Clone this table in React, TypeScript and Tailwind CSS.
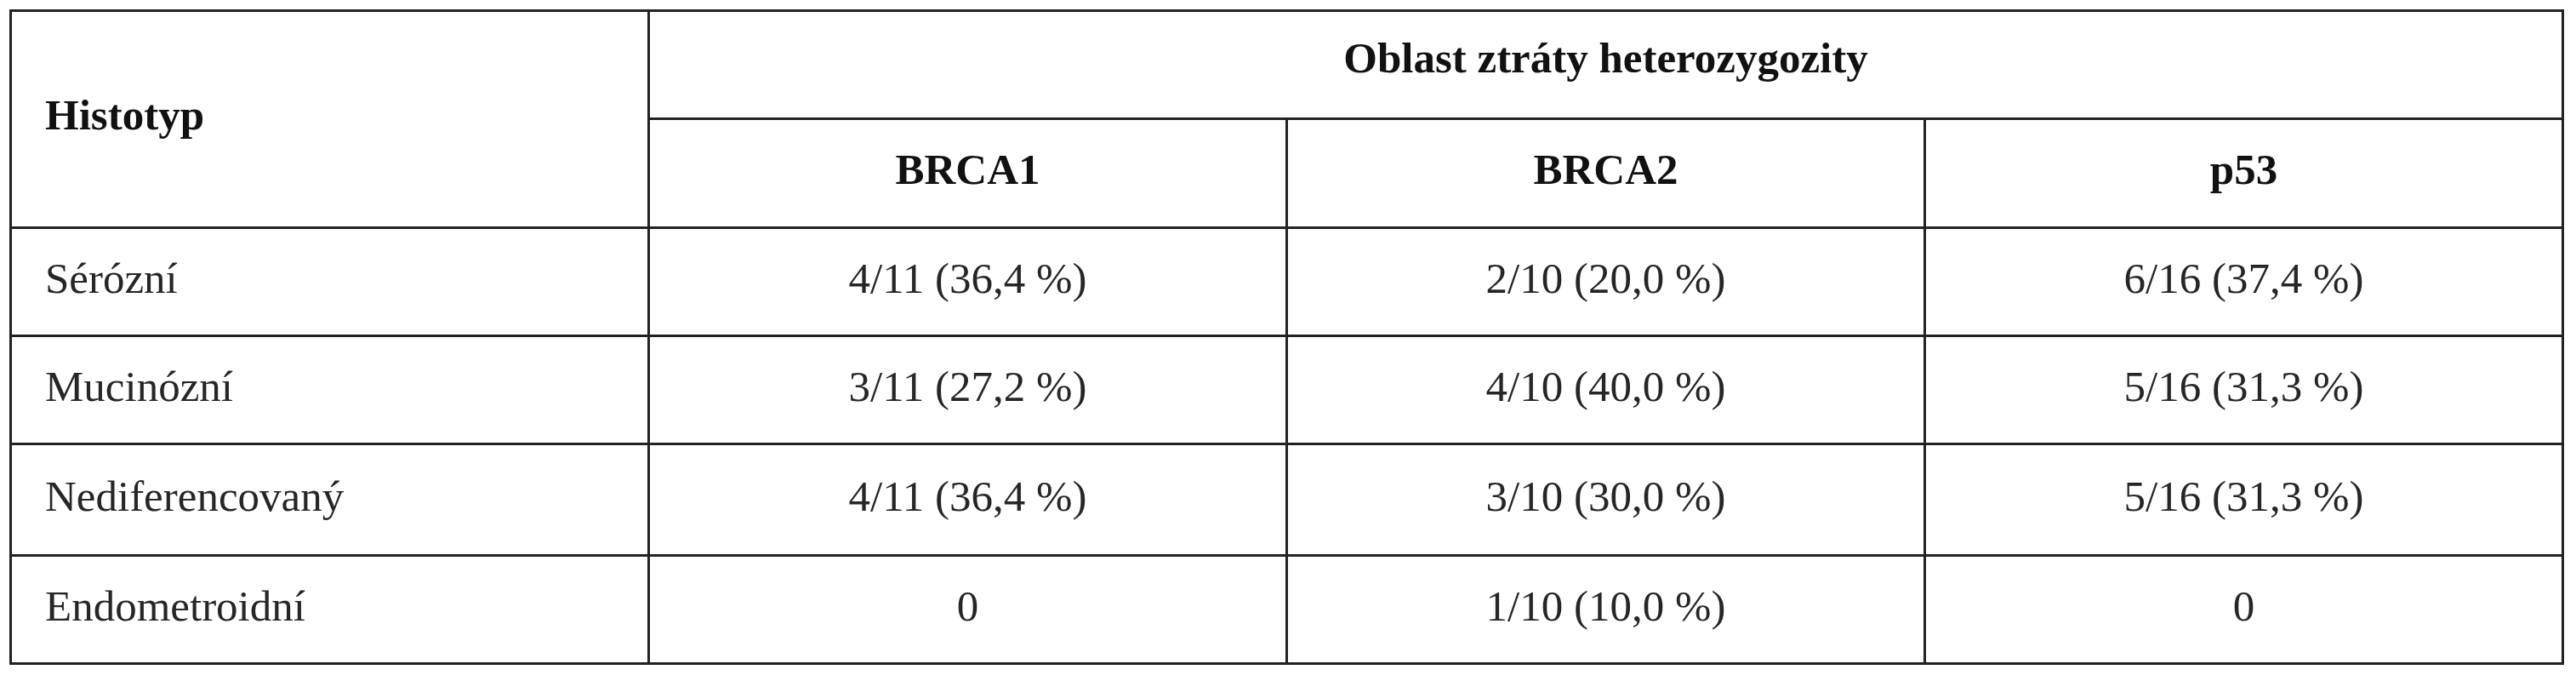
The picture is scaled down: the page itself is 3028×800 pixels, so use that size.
const rows: [string, string, string, string][] = [
  ["Sérózní", "4/11 (36,4 %)", "2/10 (20,0 %)", "6/16 (37,4 %)"],
  ["Mucinózní", "3/11 (27,2 %)", "4/10 (40,0 %)", "5/16 (31,3 %)"],
  ["Nediferencovaný", "4/11 (36,4 %)", "3/10 (30,0 %)", "5/16 (31,3 %)"],
  ["Endometroidní", "0", "1/10 (10,0 %)", "0"],
];

export default function App() {
  return (
    <div className="w-[3028px] h-[800px] bg-white pt-[11px] pl-[11px] font-['Liberation_Serif','Times_New_Roman',serif] text-[51px] text-[#262626]">
      <table className="w-[3003px] table-fixed border-collapse">
        <thead>
          <tr className="h-[127px]">
            <th
              rowSpan={2}
              className="border-[3px] border-[#222] text-left font-bold text-[#111] pl-[39px] pb-[10px] align-middle"
            >
              Histotyp
            </th>
            <th
              colSpan={3}
              className="border-[3px] border-[#222] font-bold text-[#111] text-center pb-[16px] align-middle"
            >
              Oblast ztráty heterozygozity
            </th>
          </tr>
          <tr className="h-[128px]">
            {["BRCA1", "BRCA2", "p53"].map((h) => (
              <th
                key={h}
                className="border-[3px] border-[#222] font-bold text-[#111] text-center pb-[8px] align-middle"
              >
                {h}
              </th>
            ))}
          </tr>
        </thead>
        <tbody>
          {rows.map((r, i) => (
            <tr key={i} className={i === 2 ? "h-[131px]" : "h-[127px]"}>
              <td className="border-[3px] border-[#222] text-left pl-[39px] pb-[8px] align-middle">
                {r[0]}
              </td>
              {r.slice(1).map((c, j) => (
                <td
                  key={j}
                  className="border-[3px] border-[#222] text-center pb-[8px] align-middle"
                >
                  {c}
                </td>
              ))}
            </tr>
          ))}
        </tbody>
      </table>
    </div>
  );
}
